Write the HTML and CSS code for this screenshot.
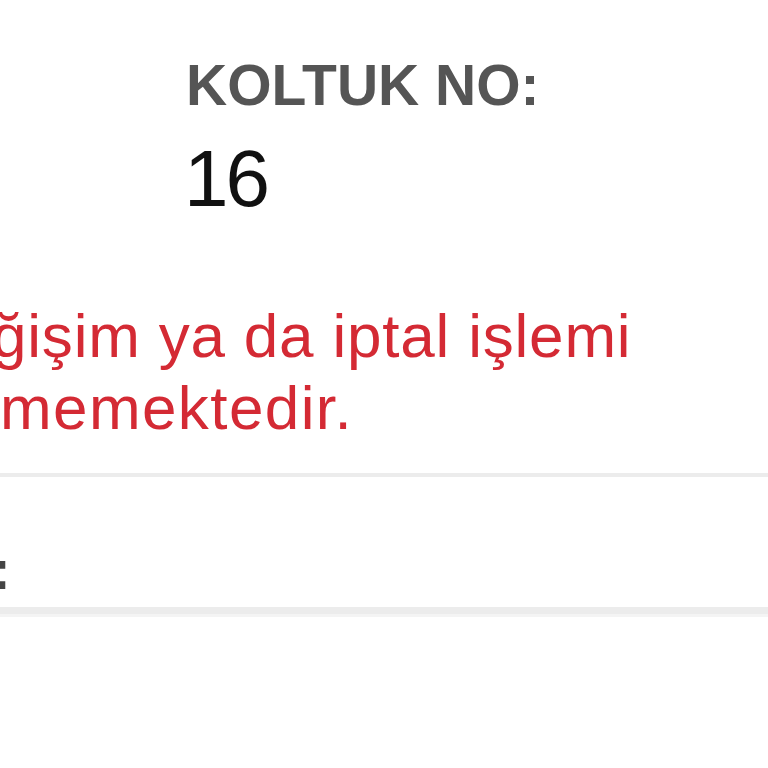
FILE: index.html
```html
<!DOCTYPE html>
<html lang="tr">
<head>
<meta charset="utf-8">
<link rel="stylesheet" href="styles.css">
</head>
<body>
<div class="page">
  <div class="seat">
    <div class="seat-label">KOLTUK NO:</div>
    <div class="seat-value">16</div>
  </div>
  <div class="notice">
    <div class="notice-line first">ğişim ya da iptal işlemi</div>
    <div class="notice-line second">memektedir.</div>
  </div>
  <div class="divider thin"></div>
  <div class="field-row">
    <span class="field-label">:</span>
  </div>
  <div class="divider thick"></div>
</div>
</body>
</html>
```

FILE: styles.css
```css
html, body {
  margin: 0;
  padding: 0;
  background: #ffffff;
}

.page {
  width: 768px;
  height: 768px;
  overflow: hidden;
  font-family: "Liberation Sans", Arial, sans-serif;
  padding-top: 52px;
  box-sizing: border-box;
}

.seat {
  margin-left: 186px;
}

.seat-label {
  font-size: 57px;
  line-height: 66px;
  font-weight: 700;
  color: #555555;
  white-space: nowrap;
}

.seat-value {
  margin-top: 16px;
  margin-left: -2px;
  font-size: 80px;
  line-height: 90px;
  letter-spacing: -3px;
  color: #111111;
}

.notice {
  margin-top: 76px;
  color: #d42a34;
  font-size: 62px;
  line-height: 72px;
  letter-spacing: 0.8px;
}

.notice-line {
  white-space: nowrap;
}

.notice-line.first {
  margin-left: -8px;
}

.notice-line.second {
  margin-left: 0;
  letter-spacing: 1.4px;
}

.divider {
  background: #ececec;
}

.divider.thin {
  margin-top: 29px;
  height: 4px;
}

.divider.thick {
  margin-top: 4px;
  height: 7px;
  border-bottom: 3px solid #f4f4f4;
}

.field-row {
  padding-top: 60px;
  height: 66px;
}

.field-label {
  display: block;
  margin-left: -8px;
  font-size: 56px;
  line-height: 66px;
  font-weight: 700;
  color: #444444;
}
```
